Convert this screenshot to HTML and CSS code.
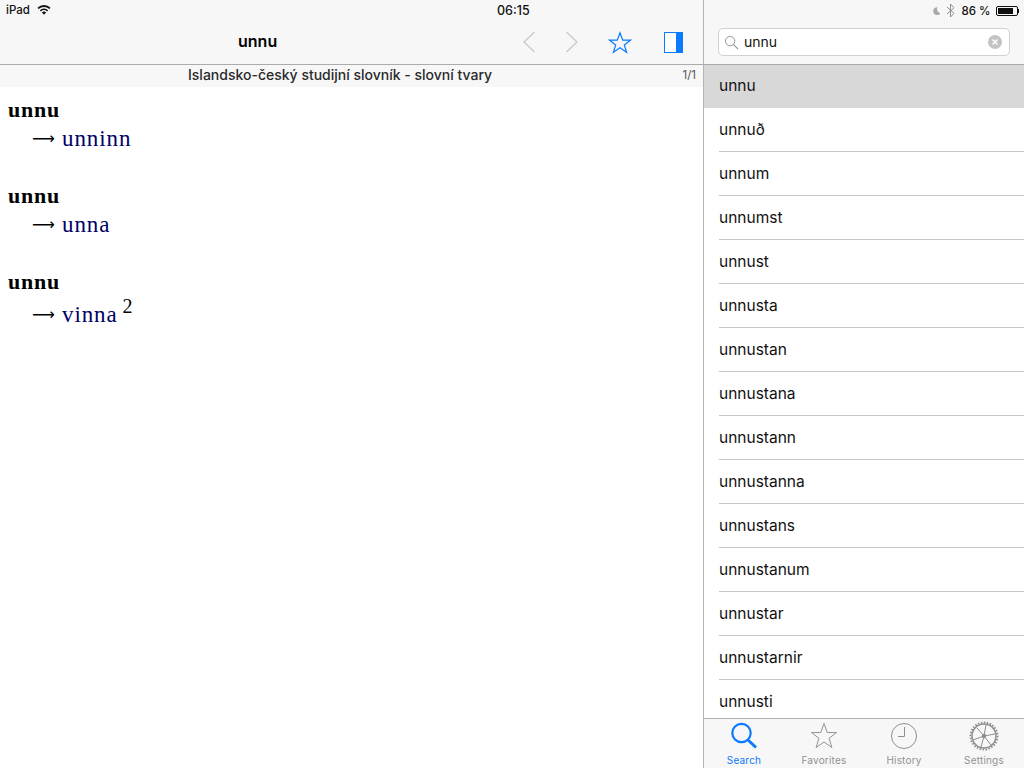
FILE: index.html
```html
<!DOCTYPE html>
<html lang="is">
<head>
<meta charset="utf-8">
<title>unnu</title>
<link rel="stylesheet" href="styles.css">
</head>
<body>
<div class="app">
  <main class="main">
    <header class="bar main-bar">
      <div class="status">
        <span class="status-left">iPad
          <svg class="wifi" viewBox="0 0 14 10" width="14" height="10"><path d="M7 9.800 4.900 7.500a3 3 0 0 1 4.200 0zM3.900 6.400 2.800 5.200a6 6 0 0 1 8.400 0l-1.100 1.200a4.400 4.400 0 0 0-6.200 0zM1.700 4.100.4 2.800a9.400 9.400 0 0 1 13.200 0l-1.300 1.300a7.600 7.600 0 0 0-10.600 0z" fill="#111"/></svg>
        </span>
        <span class="clock">06:15</span>
      </div>
      <div class="toolbar">
        <h1 class="title">unnu</h1>
        <div class="tools">
          <svg class="nav-back" viewBox="0 0 14 22" width="14" height="22"><path d="M12.500 1 2 11l10.500 10" fill="none" stroke="#c9c9c9" stroke-width="1.300"/></svg>
          <svg class="nav-next" viewBox="0 0 14 22" width="14" height="22"><path d="M1.500 1 12 11 1.500 21" fill="none" stroke="#c9c9c9" stroke-width="1.300"/></svg>
          <svg class="tool-star" viewBox="0 0 24 23" width="24" height="23"><path d="M12 1.800l2.700 7.300 7.700.1-6.100 4.700 2.300 7.400-6.600-4.500-6.600 4.500 2.300-7.400-6.100-4.700 7.700-.1z" fill="none" stroke="#0a7aff" stroke-width="1.200"/></svg>
          <svg class="tool-panel" viewBox="0 0 19 21" width="19" height="21"><rect x=".5" y=".5" width="18" height="20" fill="#fff" stroke="#0a7aff"/><rect x="12" y="0" width="7" height="21" fill="#0a7aff"/></svg>
        </div>
      </div>
    </header>
    <div class="dict-head">
      <span class="dict-name">Islandsko-český studijní slovník - slovní tvary</span>
      <span class="dict-page">1/1</span>
    </div>
    <article class="entries">
      <section class="entry"><h2 class="word">unnu</h2><p class="ref"><span class="arrow">⟶</span><a class="link">unninn</a></p></section>
      <section class="entry"><h2 class="word">unnu</h2><p class="ref"><span class="arrow">⟶</span><a class="link">unna</a></p></section>
      <section class="entry"><h2 class="word">unnu</h2><p class="ref ref-sup"><span class="arrow">⟶</span><a class="link">vinna</a><sup class="sup">2</sup></p></section>
    </article>
  </main>
  <aside class="side">
    <header class="bar side-bar">
      <div class="status status-right">
        <svg viewBox="0 0 10 10" width="9" height="10"><path d="M6 .8a4.300 4.300 0 1 0 3.300 6.600A4.800 4.800 0 0 1 6 .8z" fill="#a9a9a9"/></svg>
        <svg class="bt" viewBox="0 0 9 15" width="9" height="15"><path d="M1 4l7 6.300L4.500 14V1L8 4.700 1 11" fill="none" stroke="#8f8f8f" stroke-width="1"/></svg>
        <span class="pct">86 %</span>
        <span class="battery"><span class="battery-fill"></span></span><span class="battery-tip"></span>
      </div>
      <div class="search-wrap">
        <div class="search">
          <svg viewBox="0 0 16 16" width="15" height="15"><circle cx="6.500" cy="6.500" r="5" fill="none" stroke="#8e8e8e" stroke-width="1"/><path d="M10 10l5 5" stroke="#8e8e8e" stroke-width="1.100"/></svg>
          <span class="query">unnu</span>
          <svg class="clear" viewBox="0 0 14 14" width="14" height="14"><circle cx="7" cy="7" r="7" fill="#c4c4c4"/><path d="M4.500 4.500l5 5m0-5-5 5" stroke="#fff" stroke-width="1.500"/></svg>
        </div>
      </div>
    </header>
    <ul class="list">
      <li class="row selected"><span class="row-text">unnu</span></li>
      <li class="row"><span class="row-text">unnuð</span></li>
      <li class="row"><span class="row-text">unnum</span></li>
      <li class="row"><span class="row-text">unnumst</span></li>
      <li class="row"><span class="row-text">unnust</span></li>
      <li class="row"><span class="row-text">unnusta</span></li>
      <li class="row"><span class="row-text">unnustan</span></li>
      <li class="row"><span class="row-text">unnustana</span></li>
      <li class="row"><span class="row-text">unnustann</span></li>
      <li class="row"><span class="row-text">unnustanna</span></li>
      <li class="row"><span class="row-text">unnustans</span></li>
      <li class="row"><span class="row-text">unnustanum</span></li>
      <li class="row"><span class="row-text">unnustar</span></li>
      <li class="row"><span class="row-text">unnustarnir</span></li>
      <li class="row"><span class="row-text">unnusti</span></li>
    </ul>
    <nav class="tabs">
      <div class="tab active">
        <svg viewBox="0 0 28 28" width="28" height="28"><circle cx="11.500" cy="11" r="9.200" fill="none" stroke="#0a7aff" stroke-width="2.200"/><path d="M18 18l8 7.500" stroke="#0a7aff" stroke-width="3"/></svg>
        <span>Search</span>
      </div>
      <div class="tab">
        <svg viewBox="0 0 28 28" width="28" height="28"><path d="M14 1.500l3.200 9 9.300.1-7.400 5.700 2.800 9.200-7.900-5.500-7.900 5.500 2.800-9.200-7.400-5.700 9.300-.1z" fill="none" stroke="#929292" stroke-width="1"/></svg>
        <span>Favorites</span>
      </div>
      <div class="tab">
        <svg viewBox="0 0 28 28" width="28" height="28"><circle cx="14" cy="14" r="12.500" fill="none" stroke="#8e8e8e" stroke-width="1"/><path d="M14.500 5v9.500H8" fill="none" stroke="#8e8e8e" stroke-width="1"/></svg>
        <span>History</span>
      </div>
      <div class="tab">
        <svg viewBox="0 0 30 30" width="30" height="30"><circle cx="15" cy="15" r="12" fill="none" stroke="#8e8e8e" stroke-width="1.500"/><circle cx="15" cy="15" r="13.500" fill="none" stroke="#8e8e8e" stroke-width="2" stroke-dasharray="1.500 1.500"/><circle cx="15" cy="15" r="2.200" fill="#8e8e8e"/><path d="M15 15 8 7M15 15l2-11M15 15l11-2M15 15l7 9M15 15l-3 11M15 15 4 19" stroke="#8e8e8e" stroke-width="1"/></svg>
        <span>Settings</span>
      </div>
    </nav>
  </aside>
</div>
</body>
</html>
```
FILE: styles.css
```css
* { box-sizing: border-box; }
html, body { margin: 0; padding: 0; }
body {
  width: 1024px;
  height: 768px;
  overflow: hidden;
  background: #fff;
  color: #000;
  font-family: Inter, "Liberation Sans", sans-serif;
}
.app { display: flex; width: 1024px; height: 768px; }
.main { width: 704px; border-right: 1px solid #b4b4b4; display: flex; flex-direction: column; }
.side { width: 320px; display: flex; flex-direction: column; height: 768px; overflow: hidden; }
.bar { height: 65px; background: #f7f7f7; border-bottom: 1px solid #ababab; flex: none; }
.status { height: 20px; display: flex; align-items: center; position: relative; font-size: 11.500px; font-weight: 500; color: #111; }
.status-left { display: flex; align-items: center; gap: 7px; padding-left: 6px; }
.wifi { display: block; }
.clock { position: absolute; left: 497px; top: 3px; font-size: 12.500px; }
.toolbar { height: 44px; position: relative; display: flex; align-items: center; padding-left: 238px; }
.title { margin: 0; font-size: 16px; font-weight: 600; position: relative; top: -1px; }
.tools { position: absolute; left: 0; top: 0; width: 100%; height: 100%; }
.tools svg { position: absolute; top: 11px; }
.nav-back { left: 522px; }
.nav-next { left: 565px; }
.tool-star { left: 608px; }
.tool-panel { left: 664px; top: 12px !important; }
.dict-head { height: 22px; flex: none; background: #f7f7f7; display: flex; align-items: center; position: relative; padding: 0 0 4px 188px; font-size: 14px; font-weight: 500; color: #2a2a2a; }
.dict-page { position: absolute; right: 7px; top: 3px; font-size: 11.500px; font-weight: 400; color: #555; }
.entries { padding: 11px 0 0 8px; font-family: "Liberation Serif", serif; }
.entry { height: 86px; }
.word { margin: 0; font-size: 22px; letter-spacing: .8px; line-height: 24px; font-weight: 700; }
.ref { margin: 3px 0 0 24px; font-size: 23px; letter-spacing: .9px; line-height: 28px; white-space: nowrap; display: flex; align-items: baseline; }
.ref-sup { margin-top: 7px; }
.arrow { color: #000; font-family: "DejaVu Sans", sans-serif; font-size: 16px; letter-spacing: 0; width: 30px; flex: none; position: relative; top: -2px; }
.link { color: #000066; }
.sup { font-size: 20px; line-height: 0; position: relative; top: -9px; margin-left: 5px; }
.status-right { justify-content: flex-end; padding-right: 5px; gap: 5px; padding-top: 1px; }
.pct { font-size: 11.500px; margin: 0 0 0 2px; }
.battery { width: 22px; height: 10px; border: 1px solid #111; border-radius: 2px; padding: 1px; display: block; margin-right: -5px; }
.battery-fill { display: block; width: 86%; height: 100%; background: #111; }
.battery-tip { width: 1.500px; height: 4px; background: #111; display: block; }
.search-wrap { padding: 8px 14px 0; }
.search { height: 28px; background: #fff; border: 1px solid #d0d0d0; border-radius: 5px; display: flex; align-items: center; padding: 0 7px 0 5px; gap: 5px; }
.query { flex: 1; font-size: 14px; color: #111; padding-bottom: 2px; }
.clear { display: block; }
.list { list-style: none; margin: 0; padding: 0; flex: 1; overflow: hidden; }
.row { height: 44px; padding-left: 15px; background: #fff; }
.row-text { display: flex; align-items: center; height: 44px; border-bottom: 1px solid #c8c8c8; font-size: 15.500px; color: #111; padding-bottom: 1px; }
.selected { background: #d8d8d8; height: 43px; }
.selected .row-text { border-bottom: 0; height: 43px; padding-bottom: 3px; }
.tabs { height: 50px; flex: none; background: #f7f7f7; border-top: 1px solid #b0b0b0; display: flex; }
.tab { flex: 1; display: flex; flex-direction: column; align-items: center; font-size: 10px; color: #929292; letter-spacing: .2px; padding-top: 2px; }
.tab svg { display: block; height: 30px; flex: none; }
.tab span { line-height: 12px; margin-top: 3px; }
.tab.active { color: #0a7aff; }
```
